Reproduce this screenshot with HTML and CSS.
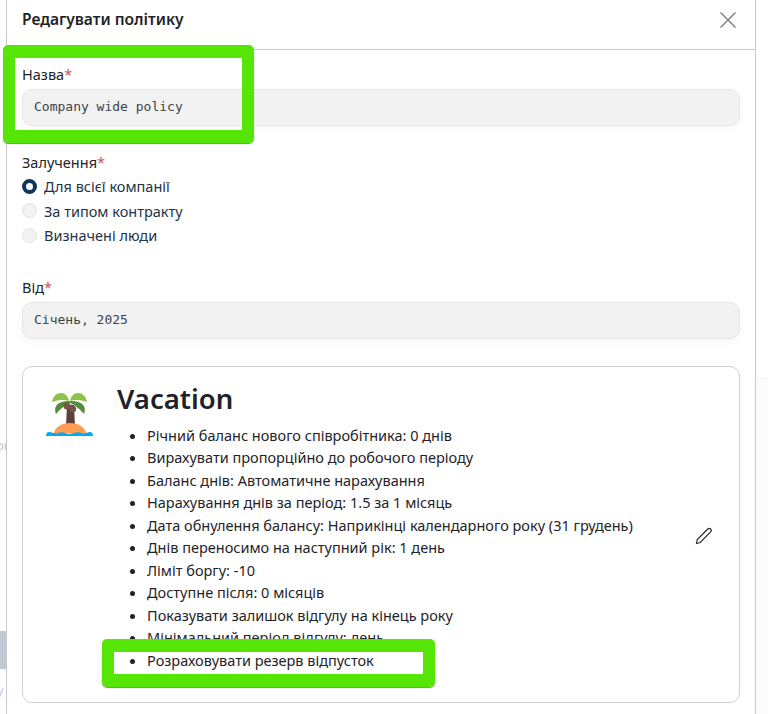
FILE: index.html
```html
<!DOCTYPE html>
<html lang="uk">
<head>
    <meta charset="UTF-8">
    <meta name="viewport" content="width=device-width, initial-scale=1.0">
    <title>Редагувати політику</title>
    <link rel="stylesheet" href="styles.css">
</head>
<body>
    <!-- Page behind the drawer -->
    <div class="backdrop">
        <span class="backdrop-text backdrop-text-top">он</span>
        <div class="backdrop-block"></div>
        <span class="backdrop-text backdrop-text-bottom">у</span>
        <div class="backdrop-right"></div>
    </div>

    <div class="drawer">
        <header class="drawer-header">
            <h1>Редагувати політику</h1>
            <button class="close-btn" aria-label="Закрити">
                <svg width="16" height="16" viewBox="0 0 16 16"><path d="M.5.5l15 15M15.500.5l-15 15"/></svg>
            </button>
        </header>

        <form class="drawer-body">
            <div class="field field-name">
                <label>Назва<span class="req">*</span></label>
                <div class="input">Company wide policy</div>
            </div>

            <div class="field field-scope">
                <label>Залучення<span class="req">*</span></label>
                <div class="radio-row"><span class="radio radio-on"></span>Для всієї компанії</div>
                <div class="radio-row"><span class="radio"></span>За типом контракту</div>
                <div class="radio-row"><span class="radio"></span>Визначені люди</div>
            </div>

            <div class="field field-from">
                <label>Від<span class="req">*</span></label>
                <div class="input">Січень, 2025</div>
            </div>

            <div class="policy-card">
                <svg class="palm" width="48" height="48" viewBox="0 0 48 48">
                    <path d="M21 15h7l1 21h-9z" fill="#5d4037"/>
                    <path d="M8 43c1-6 8-10 16-10s15 4 16 10z" fill="#ff9d52"/>
                    <path d="M0 46c0-2 1-4 3-4 3 0 6 2 9 1 3-1 5-1 7 0s6 1 9 0 5-1 8 0 5-1 8-1c2 0 3 2 3 4z" fill="#03a9f4"/>
                    <path d="M10 24c-3-8 2-13 13-13 1 0 2 1 1 2-5 2-10 6-14 11z" fill="#558b3f"/>
                    <path d="M38 24c3-8-2-13-13-13-1 0-2 1-1 2 5 2 10 6 14 11z" fill="#558b3f"/>
                    <path d="M6 12C7 6 11 3 15 3c4 0 7 3 8 8-5-2-12-1-17 1z" fill="#8bc34a"/>
                    <path d="M41 12c-1-6-5-9-9-9-4 0-7 3-8 8 5-2 12-1 17 1z" fill="#8bc34a"/>
                    <circle cx="21" cy="16" r="3.500" fill="#795548"/>
                    <circle cx="27" cy="19" r="3.200" fill="#795548"/>
                </svg>
                <div class="policy-info">
                    <h2>Vacation</h2>
                    <ul>
                        <li>Річний баланс нового співробітника: 0 днів</li>
                        <li>Вирахувати пропорційно до робочого періоду</li>
                        <li>Баланс днів: Автоматичне нарахування</li>
                        <li>Нарахування днів за період: 1.5 за 1 місяць</li>
                        <li>Дата обнулення балансу: Наприкінці календарного року (31 грудень)</li>
                        <li>Днів переносимо на наступний рік: 1 день</li>
                        <li>Ліміт боргу: -10</li>
                        <li>Доступне після: 0 місяців</li>
                        <li>Показувати залишок відгулу на кінець року</li>
                        <li>Мінімальний період відгулу: день</li>
                        <li>Розраховувати резерв відпусток</li>
                    </ul>
                </div>
                <button class="edit-btn" aria-label="Редагувати">
                    <svg width="18" height="18" viewBox="0 0 18 18"><path d="M1.500 16.500l.8-4L12.800 2c.8-.8 2-.8 2.800 0s.8 2 0 2.800L5.200 15.500z"/></svg>
                </button>
            </div>
        </form>
    </div>

    <!-- Green highlight marks put on the screenshot -->
    <div class="mark mark-name"></div>
    <div class="mark mark-reserve"></div>
</body>
</html>
```

FILE: styles.css
```css
/* Basic Styling */
html, body {
    height: 100%;
}

body {
    margin: 0;
    overflow: hidden;
    background: #fff;
    color: #1f2328;
    font-family: 'Noto Sans', 'Open Sans', sans-serif;
    font-size: 14.500px;
}

/* Page behind the drawer */
.backdrop-text {
    position: absolute;
    left: -4px;
    color: #b9c9dd;
    font-size: 13px;
}

.backdrop-text-top {
    top: 436px;
}

.backdrop-text-bottom {
    left: -3px;
    top: 681px;
}

.backdrop-block {
    position: absolute;
    left: 0;
    top: 631px;
    width: 6px;
    height: 38px;
    background: #c0c8d2;
}

.backdrop-right {
    position: absolute;
    left: 756px;
    right: 0;
    top: 378px;
    bottom: 0;
    background: #fcfcfc;
    border-top: 1px solid #f4f4f4;
}

/* Drawer */
.drawer {
    position: absolute;
    left: 6px;
    top: 0;
    bottom: 0;
    width: 748px;
    background: #fff;
    border-left: 1px solid #c9c9c9;
    border-right: 1px solid #c9c9c9;
}

.drawer-header {
    display: flex;
    justify-content: space-between;
    align-items: center;
    height: 49px;
    padding: 0 19px 0 15px;
    border-bottom: 1px solid #c9c9c9;
}

.drawer-header h1 {
    margin: -11px 0 0;
    font-size: 15.600px;
    font-weight: 600;
}

.close-btn,
.edit-btn {
    padding: 0;
    border: none;
    background: none;
    cursor: pointer;
}

.close-btn svg {
    display: block;
    margin-top: -10px;
    fill: none;
    stroke: #828282;
    stroke-width: 1.500;
}

.drawer-body {
    padding: 15px 15px 0;
}

label {
    display: block;
    line-height: 18px;
}

.req {
    color: #c9545c;
}

.input {
    height: 35px;
    margin-top: 6px;
    padding: 0 11px;
    border: 1px solid #e6e6e6;
    border-radius: 10px;
    background: #f2f2f2;
    box-shadow: 0 4px 8px rgba(0, 0, 0, 0.03);
    color: #3c4248;
    font-family: 'DejaVu Sans Mono', 'Liberation Mono', monospace;
    font-size: 13px;
    line-height: 34px;
}

.field-scope {
    margin-top: 27px;
}

.field-scope label {
    margin-bottom: 3px;
}

.field-from {
    margin-top: 30px;
}

.radio-row {
    display: flex;
    align-items: center;
    gap: 7px;
    height: 24.500px;
    color: #1d3346;
}

.radio {
    width: 13px;
    height: 13px;
    border: 1px solid #e2e2e2;
    border-radius: 50%;
    background: #f2f2f2;
}

.radio-on {
    width: 7px;
    height: 7px;
    border: 4px solid #12365a;
    background: #fff;
}

/* Policy card */
.policy-card {
    display: flex;
    position: relative;
    min-height: 326px;
    margin-top: 27px;
    padding: 9px 0 0 23px;
    border: 1px solid #d0d0d0;
    border-radius: 10px;
}

.palm {
    margin-top: 14px;
    flex: none;
}

.policy-info {
    margin-left: 23px;
}

.policy-info h2 {
    margin: 0 0 2px;
    font-size: 27.500px;
    font-weight: 600;
    line-height: 46px;
}

.policy-info ul {
    margin: 0;
    padding-left: 30px;
    line-height: 22.500px;
}

.edit-btn {
    position: absolute;
    left: 672px;
    top: 160px;
}

.edit-btn svg {
    display: block;
    fill: none;
    stroke: #2a2a2a;
    stroke-width: 1.200;
}

/* Highlight marks */
.mark {
    position: absolute;
    box-sizing: border-box;
    border: solid #55e605;
    border-width: 13px 12px;
    border-radius: 5px;
    box-shadow: 0 1px 1px rgba(0, 0, 0, 0.5);
}

.mark-name {
    left: 3px;
    top: 45px;
    width: 251px;
    height: 98px;
}

.mark-reserve {
    left: 102px;
    top: 639px;
    width: 333px;
    height: 48px;
}
```
